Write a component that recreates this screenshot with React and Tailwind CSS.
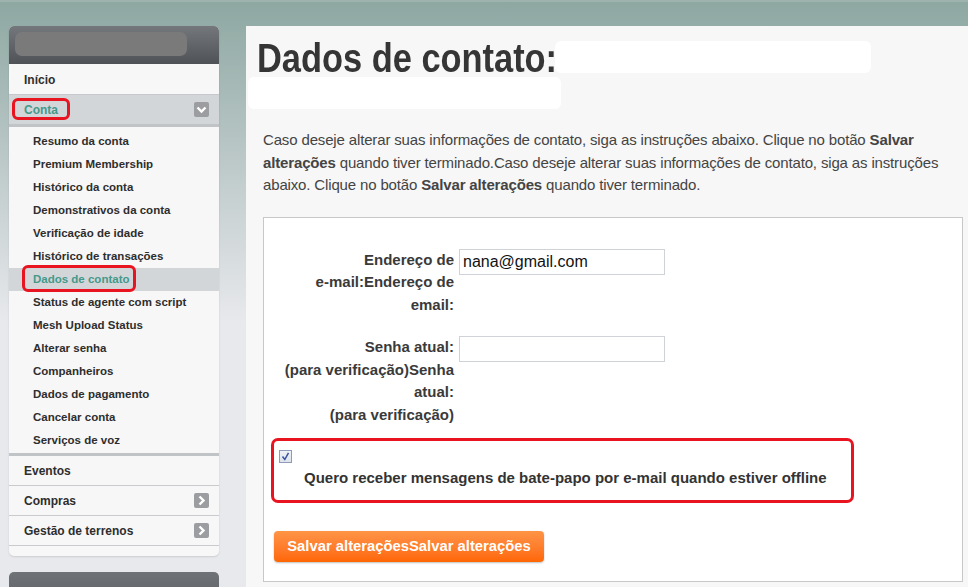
import React from "react";

const SANS = "font-['Liberation_Sans',Arial,sans-serif]";

function Chevron({ dir = "right" }) {
  return (
    <span className="flex h-[15px] w-[15px] items-center justify-center rounded-[2px] bg-[#9b9da0]">
      <svg width="11" height="11" viewBox="0 0 11 11">
        {dir === "right" ? (
          <path d="M3.5 1.5 L7.5 5.5 L3.5 9.5" fill="none" stroke="#fff" strokeWidth="2.4" />
        ) : (
          <path d="M1.5 3.5 L5.5 7.5 L9.5 3.5" fill="none" stroke="#fff" strokeWidth="2.4" />
        )}
      </svg>
    </span>
  );
}

const subItems = [
  "Resumo da conta",
  "Premium Membership",
  "Histórico da conta",
  "Demonstrativos da conta",
  "Verificação de idade",
  "Histórico de transações",
  "Dados de contato",
  "Status de agente com script",
  "Mesh Upload Status",
  "Alterar senha",
  "Companheiros",
  "Dados de pagamento",
  "Cancelar conta",
  "Serviços de voz",
];

function Sidebar() {
  return (
    <div className={`flex w-[210px] flex-col ${SANS}`}>
      <div className="overflow-hidden rounded-[5px] bg-[#f7f7f7] shadow-[0_1px_2px_rgba(0,0,0,0.12)]">
        <div className="h-[38px] bg-gradient-to-b from-[#74787c] to-[#4f5256] px-[6px] pt-[6px]">
          <div className="h-[24px] w-[172px] rounded-[7px] bg-[#7a7a7a] blur-[0.6px]" />
        </div>
        <div className="flex h-[31px] items-center border-b border-[#c6c8cb] pl-[15px] pt-[1px] text-[12px] font-bold text-[#2e2e2e]">
          Início
        </div>
        <div className="flex h-[32px] items-center justify-between border-b-[3px] border-[#c1c4c7] bg-[#d3d6d9] pl-[15px] pr-[10px]">
          <span className="relative text-[12px] font-bold text-[#44998b]">
            Conta
            <span className="absolute -left-[12px] -top-[3px] h-[22px] w-[58px] rounded-[6px] border-[3px] border-[#e8141f]" />
          </span>
          <Chevron dir="down" />
        </div>
        <div className="flex flex-col pt-[3px]">
          {subItems.map((t) => {
            const active = t === "Dados de contato";
            return (
              <div
                key={t}
                className={`flex h-[23px] items-center pl-[24px] pt-[1px] text-[11.5px] font-bold ${
                  active ? "bg-[#d3d6d9] text-[#44998b]" : "text-[#2e2e2e]"
                }`}
              >
                <span className="relative">
                  {t}
                  {active && (
                    <span className="absolute -left-[11px] -top-[6px] h-[27px] w-[114px] rounded-[6px] border-[3px] border-[#e8141f]" />
                  )}
                </span>
              </div>
            );
          })}
        </div>
        <div className="mt-[1px] h-[3px] bg-[#c1c4c7]" />
        <div className="flex h-[30px] items-center border-b border-[#c9cacd] pl-[15px] text-[12px] font-bold text-[#2e2e2e]">
          Eventos
        </div>
        <div className="flex h-[30px] items-center justify-between border-b border-[#c9cacd] pl-[15px] pr-[10px] text-[12px] font-bold text-[#2e2e2e]">
          Compras
          <Chevron />
        </div>
        <div className="flex h-[30px] items-center justify-between border-b border-[#c9cacd] pl-[15px] pr-[10px] text-[12px] font-bold text-[#2e2e2e]">
          Gestão de terrenos
          <Chevron />
        </div>
        <div className="h-[10px]" />
      </div>
      <div className="mt-[16px] h-[40px] rounded-t-[5px] bg-gradient-to-b from-[#6f7377] to-[#5a5d61]" />
    </div>
  );
}

function Content() {
  return (
    <div className={`flex-1 bg-[#f7f7f7] pr-[5px] ${SANS}`}>
      <div className="flex pl-[11px] pt-[15px]">
        <h1 className="flex h-[32px] w-[298px] items-center overflow-visible pt-[2px] text-[40px] font-bold leading-[32px] text-[#353535]">
          <span className="inline-block origin-left scale-x-[0.86] whitespace-nowrap">Dados de contato:</span>
        </h1>
        <div className="h-[32px] w-[316px] rounded-[6px] bg-white" />
      </div>
      <div className="ml-[2px] mt-[4px] h-[32px] w-[313px] rounded-[6px] bg-white" />
      <p className="mt-[20px] whitespace-nowrap pl-[17px] text-[15px] leading-[22.5px] tracking-[-0.15px] text-[#444]">
        Caso deseje alterar suas informações de contato, siga as instruções abaixo. Clique no botão{" "}
        <b>Salvar</b>
        <br />
        <b>alterações</b> quando tiver terminado.Caso deseje alterar suas informações de contato, siga as instruções
        <br />
        abaixo. Clique no botão <b>Salvar alterações</b> quando tiver terminado.
      </p>
      <div className="ml-[17px] mt-[20px] h-[365px] border border-[#c8c8c8] bg-white pt-[31px]">
        <div className="flex">
          <div className="w-[190px] text-right text-[15px] font-bold leading-[22.5px] text-[#3a3a3a]">
            Endereço de
            <br />
            e-mail:Endereço de
            <br />
            email:
          </div>
          <div className="ml-[5px] flex h-[26px] w-[206px] items-center border border-[#cfd3d8] bg-white pl-[3px] text-[16px] text-[#111]">
            nana@gmail.com
          </div>
        </div>
        <div className="mt-[20px] flex">
          <div className="w-[190px] text-right text-[15px] font-bold leading-[22.5px] text-[#3a3a3a]">
            Senha atual:
            <br />
            (para verificação)Senha
            <br />
            atual:
            <br />
            (para verificação)
          </div>
          <div className="ml-[5px] h-[26px] w-[206px] border border-[#cfd3d8] bg-white" />
        </div>
        <div className="ml-[7px] mt-[12px] h-[65px] w-[583px] rounded-[7px] border-[3px] border-[#e8141f] pl-[5px] pt-[9px]">
          <span className="flex h-[13px] w-[13px] items-center justify-center border border-[#8e9cb8] bg-gradient-to-b from-[#eef1f6] to-[#dde3ec]">
            <svg width="9" height="9" viewBox="0 0 9 9">
              <path d="M1.5 4.5 L3.8 7.5 L7.5 0.8" fill="none" stroke="#3b4fa0" strokeWidth="1.5" />
            </svg>
          </span>
          <div className="mt-[5px] whitespace-nowrap pl-[25px] text-[15px] font-bold leading-[20px] text-[#333]">
            Quero receber mensagens de bate-papo por e-mail quando estiver offline
          </div>
        </div>
        <button className="ml-[10px] mt-[28px] flex h-[31px] w-[270px] items-center justify-center rounded-[4px] bg-gradient-to-b from-[#ff9445] to-[#ff6600] text-[14.8px] font-bold text-white shadow-[0_1px_2px_rgba(0,0,0,0.25)]">
          Salvar alteraçõesSalvar alterações
        </button>
      </div>
    </div>
  );
}

export default function App() {
  return (
    <div className="h-[587px] w-[968px] overflow-hidden bg-gradient-to-b from-[#8da7a1] via-[#c9d2d3] via-35% to-[#e8e9ec] to-55%">
      <div className="h-[2px] bg-[#9fb3ae]" />
      <div className="flex pl-[9px] pt-[24px]">
        <Sidebar />
        <div className="ml-[27px] flex flex-1">
          <Content />
        </div>
      </div>
    </div>
  );
}
